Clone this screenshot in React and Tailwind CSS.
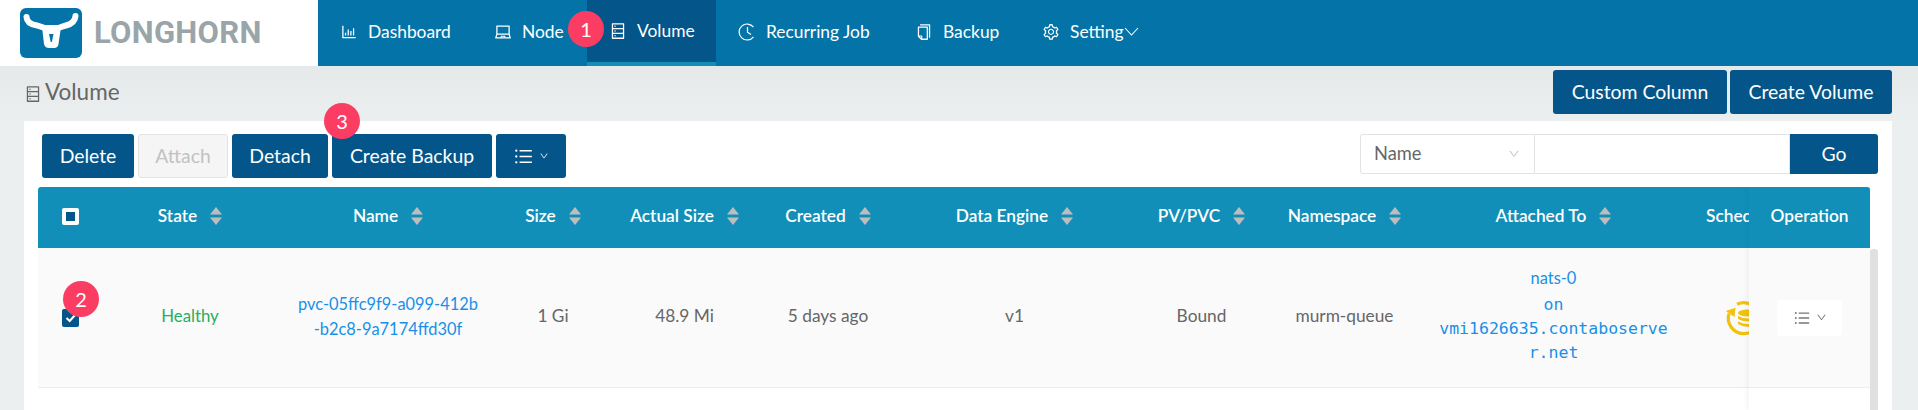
import {
  AiOutlineBarChart,
  AiOutlineLaptop,
  AiOutlineDatabase,
  AiOutlineCopy,
  AiOutlineSetting,
  AiOutlineUnorderedList,
  AiOutlineDown,
} from 'react-icons/ai';

const gridCols = 'grid grid-cols-[69px_166px_230px_100px_163px_124px_249px_125px_161px_257px_1fr]';

function ClockIcon({ className }) {
  return (
    <svg width="18" height="18" viewBox="0 0 18 18" className={className}>
      <path d="M15.5 4.2 A8 8 0 1 0 15.5 13.8" fill="none" stroke="currentColor" strokeWidth="1.2" />
      <path d="M9.5 4 V9.2 L13 11.6" fill="none" stroke="currentColor" strokeWidth="1.2" />
    </svg>
  );
}

function Logo() {
  return (
    <div className="w-[318px] h-full bg-white flex items-center pl-[20px] shrink-0">
      <svg width="62" height="50" viewBox="0 0 62 50">
        <rect width="62" height="50" rx="6" fill="#0474a8" />
        <path d="M6.5 9 Q7 16 17 17.5 L25 20 H38 L46 17.5 Q55 15 55.5 8" fill="none" stroke="#fff" strokeWidth="6" strokeLinecap="round" />
        <path d="M22 19 L24 36 Q25 40 29 40 H34 Q38 40 38.5 36 L41 19Z" fill="#fff" />
        <path d="M29 26 h4.5 l-1.6 8 h-1.2z" fill="#0474a8" />
      </svg>
      <span className="ml-[12px] text-[31px] font-bold text-[#9aa5a9] font-['Roboto',sans-serif] tracking-[0.3px]">LONGHORN</span>
    </div>
  );
}

function NavItem({ icon: Icon, label, active, suffix, className }) {
  return (
    <div className={`h-full flex items-center gap-[10px] pl-[22px] pb-[2px] text-[17.4px] text-white ${active ? 'bg-[#04568a] border-b-4 border-[#118fb9] pb-0 pt-[2px]' : ''} ${className}`}>
      <Icon className="text-[18px] shrink-0" />
      <span className="flex items-center">{label}{suffix}</span>
    </div>
  );
}

function Btn({ children, className }) {
  return (
    <button className={`h-[44px] rounded-[3px] text-[19.4px] flex items-center justify-center ${className}`}>
      {children}
    </button>
  );
}

const btnPrimary = 'bg-[#04568a] text-white';

function Sorter() {
  return (
    <svg width="12" height="18" viewBox="0 0 12 18" className="shrink-0 ml-[13px]">
      <path d="M6 0 L12 7.5 H0Z" fill="#bdbdbd" />
      <path d="M0 10.5 H12 L6 18Z" fill="#bdbdbd" />
    </svg>
  );
}

function Th({ children }) {
  return (
    <div className="flex items-center justify-center font-semibold pb-[3px]">
      <span>{children}</span>
      <Sorter />
    </div>
  );
}

function Td({ children, className }) {
  return <div className={`flex items-center justify-center text-center pb-[3px] ${className || 'text-[#666]'}`}>{children}</div>;
}

function Badge({ n, className }) {
  return (
    <div className={`absolute z-20 w-[36px] h-[36px] rounded-full bg-[#fb3d64] text-white text-[20px] flex items-center justify-center ${className}`}>
      {n}
    </div>
  );
}

function ScheduleIcon() {
  return (
    <svg width="40" height="40" viewBox="0 0 40 40">
      <path d="M5 14.5 A15.5 15.5 0 1 0 13 5.2" fill="none" stroke="#f2c20f" strokeWidth="3.2" />
      <path d="M1.7 12 L11.5 8.8 L10.5 18Z" fill="#f2c20f" />
      <ellipse cx="24" cy="14" rx="10" ry="3.4" fill="#f2c20f" />
      <path d="M14 17 Q24 22 34 17 V20 Q24 25 14 20Z" fill="#f2c20f" />
      <path d="M14 22.5 Q24 27.5 34 22.5 V25 Q24 31 14 25Z" fill="#f2c20f" />
    </svg>
  );
}

export default function App() {
  return (
    <div className="relative w-[1918px] h-[410px] overflow-hidden bg-[#ebeff0] font-['Lato',sans-serif] flex flex-col">
      <header className="h-[66px] flex shrink-0">
        <Logo />
        <nav className="flex-1 h-full flex bg-[#0474a8]">
          <NavItem icon={AiOutlineBarChart} label="Dashboard" className="w-[154px]" />
          <NavItem icon={AiOutlineLaptop} label="Node" className="w-[115px]" />
          <NavItem icon={AiOutlineDatabase} label="Volume" active className="w-[129px]" />
          <NavItem icon={ClockIcon} label="Recurring Job" className="w-[177px]" />
          <NavItem icon={AiOutlineCopy} label="Backup" className="w-[127px]" />
          <NavItem
            icon={AiOutlineSetting}
            label="Setting"
            className="w-[150px]"
            suffix={
              <svg width="15" height="9" viewBox="0 0 15 9" className="ml-[1px]">
                <path d="M1 1 L7.5 8 L14 1" fill="none" stroke="#fff" strokeWidth="1.1" />
              </svg>
            }
          />
        </nav>
      </header>

      <div className="h-[55px] shrink-0 flex justify-between pl-[24px] pr-[26px] pt-[4px] bg-gradient-to-b from-[#e5e9ea] to-[#ebeff0]">
        <div className="flex items-center gap-[3px] text-[#666] text-[22.5px] h-[44px]">
          <AiOutlineDatabase className="text-[18px] mt-[3px]" />
          <span>Volume</span>
        </div>
        <div className="flex gap-[3px]">
          <Btn className={`w-[174px] ${btnPrimary}`}>Custom Column</Btn>
          <Btn className={`w-[162px] ${btnPrimary}`}>Create Volume</Btn>
        </div>
      </div>

      <main className="flex-1 ml-[24px] mr-[26px] bg-white pl-[14px] pr-[14px] pt-[13px] flex flex-col min-h-0">
        <div className="flex justify-between items-start pl-[4px] mb-[9px] shrink-0">
          <div className="flex gap-[4px]">
            <Btn className={`w-[92px] ${btnPrimary}`}>Delete</Btn>
            <Btn className="w-[90px] bg-[#f5f5f5] border border-[#e3e3e3] text-[#c2c2c2]">Attach</Btn>
            <Btn className={`w-[96px] ${btnPrimary}`}>Detach</Btn>
            <Btn className={`w-[160px] ${btnPrimary}`}>Create Backup</Btn>
            <Btn className={`w-[70px] gap-[5px] ${btnPrimary}`}>
              <AiOutlineUnorderedList className="text-[21px]" />
              <AiOutlineDown className="text-[10px]" />
            </Btn>
          </div>
          <div className="flex h-[40px] rounded-[3px]">
            <div className="w-[175px] border border-[#e3e3e3] rounded-l-[3px] flex items-center justify-between pl-[13px] pr-[14px] text-[#666] text-[18.3px]">
              <span>Name</span>
              <AiOutlineDown className="text-[12px] text-[#c4c4c4]" />
            </div>
            <div className="w-[255px] border-y border-r border-[#e3e3e3]" />
            <div className="w-[88px] bg-[#04568a] text-white flex items-center justify-center rounded-r-[3px] text-[19.4px]">Go</div>
          </div>
        </div>

        <div className="flex flex-1 min-h-0">
          <div className="relative flex-1 text-[17.3px] overflow-hidden rounded-t-[3px]">
            <div className={`${gridCols} h-[61px] bg-[#118fb9] text-white`}>
              <div className="flex items-center pl-[24px] pb-[2px]">
                <div className="w-[17px] h-[17px] bg-white rounded-[2px] flex items-center justify-center">
                  <div className="w-[9px] h-[9px] bg-[#04568a]" />
                </div>
              </div>
              <Th>State</Th>
              <Th>Name</Th>
              <Th>Size</Th>
              <Th>Actual Size</Th>
              <Th>Created</Th>
              <Th>Data Engine</Th>
              <Th>PV/PVC</Th>
              <Th>Namespace</Th>
              <Th>Attached To</Th>
              <div className="flex items-center pl-[24px] pb-[3px] font-semibold whitespace-nowrap">Schedule</div>
            </div>

            <div className={`${gridCols} h-[140px] bg-[#fafafa] border-b border-[#eeeeee]`}>
              <div className="flex items-center pl-[24px]">
                <div className="w-[17px] h-[18px] bg-[#04568a] rounded-[2px] flex items-center justify-center">
                  <svg width="12" height="10" viewBox="0 0 12 10">
                    <path d="M1.5 5 L4.7 8 L10.5 1.5" fill="none" stroke="#fff" strokeWidth="2" />
                  </svg>
                </div>
              </div>
              <Td className="text-[#27ae60] text-[16.8px]">Healthy</Td>
              <Td className="text-[#1890e8] text-[16.4px] leading-[25px]">
                <span>pvc-05ffc9f9-a099-412b<br />-b2c8-9a7174ffd30f</span>
              </Td>
              <Td>1 Gi</Td>
              <Td>48.9 Mi</Td>
              <Td>5 days ago</Td>
              <Td>v1</Td>
              <Td>Bound</Td>
              <Td>murm-queue</Td>
              <div className="flex flex-col items-center justify-center text-center text-[#1890e8] px-[13px] pb-[4px]">
                <span className="leading-[24px] mb-[3px] text-[16.4px]">nats-0</span>
                <span className="font-['DejaVu_Sans_Mono',monospace] text-[16.5px] leading-[24px] break-all">
                  on<br />vmi1626635.contaboserver.net
                </span>
              </div>
              <div className="flex items-center pl-[42px] pt-[2px]">
                <ScheduleIcon />
              </div>
            </div>

            <div className="h-[100px] bg-white" />

            <div className="absolute top-0 right-0 bottom-0 w-[121px] shadow-[-3px_0_5px_rgba(0,0,0,0.04)] bg-white">
              <div className="h-[61px] bg-[#118fb9] text-white font-semibold flex items-center justify-center pb-[3px]">Operation</div>
              <div className="h-[140px] bg-[#fafafa] border-b border-[#eeeeee] flex items-center justify-center">
                <div className="w-[65px] h-[36px] bg-white rounded-[4px] flex items-center justify-center gap-[5px] text-[#777]">
                  <AiOutlineUnorderedList className="text-[18px]" />
                  <AiOutlineDown className="text-[11px]" />
                </div>
              </div>
            </div>
          </div>
          <div className="w-[8px] shrink-0 pt-[62px]">
            <div className="h-full bg-[#e0e0e0] rounded-t-[3px]" />
          </div>
        </div>
      </main>

      <Badge n="1" className="left-[568px] top-[11px]" />
      <Badge n="2" className="left-[63px] top-[281px]" />
      <Badge n="3" className="left-[324px] top-[103px]" />
    </div>
  );
}
